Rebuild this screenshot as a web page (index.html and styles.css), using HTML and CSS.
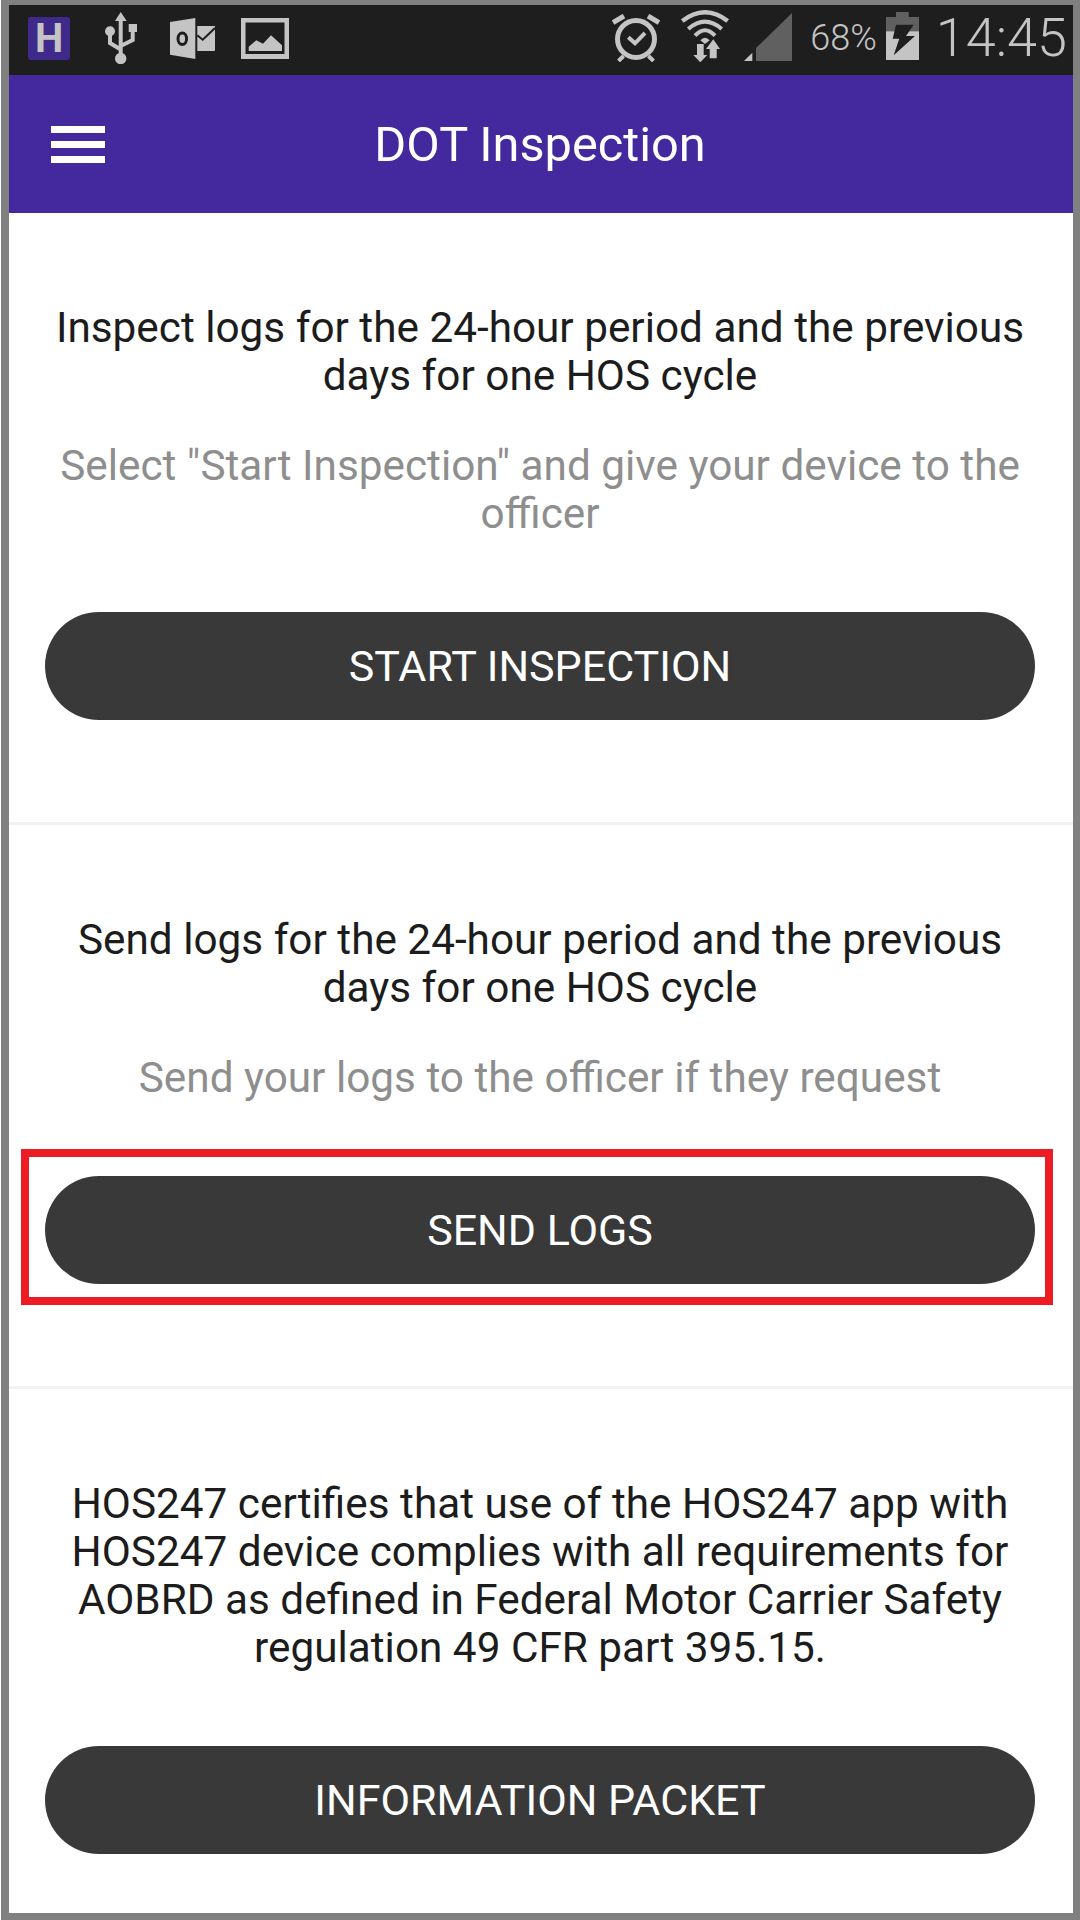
FILE: index.html
```html
<!DOCTYPE html>
<html lang="en">
<head>
  <meta charset="UTF-8" />
  <meta name="viewport" content="width=device-width, initial-scale=1.0" />
  <title>DOT Inspection</title>

  <link rel="stylesheet" href="styles.css">
</head>
<body>

  <div class="frame">

    <div class="statusbar">
      <div class="status-left">
        <div class="app-badge">H</div>

        <svg class="icon-usb" viewBox="0 0 32 52">
          <path fill="#c4c4c4" d="M15.700 0l6 9H10z"/>
          <path fill="none" stroke="#c4c4c4" stroke-width="4" d="M15.700 8v36M5 22v9l10.700 6.500M27.700 18v10l-12 6"/>
          <circle cx="15.700" cy="46.500" r="5.700" fill="#c4c4c4"/>
          <circle cx="5" cy="19.300" r="5" fill="#c4c4c4"/>
          <path fill="#c4c4c4" d="M23.700 12H32v8h-8.300z"/>
        </svg>

        <svg class="icon-outlook" viewBox="0 0 45 41">
          <path fill="#c4c4c4" d="M0 4L25.300 0v41L0 36.700z"/>
          <path fill="#c4c4c4" d="M27.300 8H45v24a1 1 0 0 1-1 1H27.300z"/>
          <path fill="none" stroke="#1e1e1e" stroke-width="2" d="M27.300 17.300l5.400 4.400L45 10"/>
          <ellipse cx="12.300" cy="20.700" rx="4.300" ry="5.800" fill="none" stroke="#1e1e1e" stroke-width="3"/>
        </svg>

        <svg class="icon-picture" viewBox="0 0 48 41">
          <path fill="#c4c4c4" fill-rule="evenodd" d="M0 0h48v41H0zM4.500 4.500v31.500h39V4.500z"/>
          <path fill="#c4c4c4" d="M7.700 33v-4.300l7.600-6.400 6.700 3.400 8-8.400 11 10V33z"/>
        </svg>
      </div>

      <div class="status-right">
        <svg class="icon-alarm" viewBox="0 0 48 48">
          <circle cx="24" cy="25" r="18.500" fill="none" stroke="#c4c4c4" stroke-width="5"/>
          <path fill="none" stroke="#c4c4c4" stroke-width="5" d="M1 8.500L12 2M47 8.500L36 2"/>
          <path fill="none" stroke="#c4c4c4" stroke-width="4" d="M6.500 47l5-5M41.500 47l-5-5"/>
          <path fill="none" stroke="#c4c4c4" stroke-width="4" d="M16.300 23.300l6.700 6 10-10.300"/>
        </svg>

        <svg class="icon-wifi" viewBox="0 0 49 52">
          <path fill="none" stroke="#c4c4c4" stroke-width="4.500" d="M2.300 11Q25-6.400 47.700 11"/>
          <path fill="none" stroke="#c4c4c4" stroke-width="4" d="M8.300 19Q25 4.400 41.700 19"/>
          <path fill="none" stroke="#c4c4c4" stroke-width="4" d="M15 25.700Q25 14.900 35 25.700"/>
          <path fill="#c4c4c4" d="M20.300 30.300Q25 25 29.700 30.300L25 34z"/>
          <path fill="#c4c4c4" d="M17 34h6.700v11h3.600l-7 7.300-7-7.300H17z"/>
          <path fill="#c4c4c4" d="M33.300 29.300l6.700 9.700h-3.300v9.300h-7V39H26z"/>
        </svg>

        <svg class="icon-signal" viewBox="0 0 48 48">
          <path fill="#606060" d="M12 48V35L48 0v48z"/>
          <path fill="#c4c4c4" d="M0 48l8.300-8.300V48z"/>
        </svg>

        <span class="battery-pct">68%</span>

        <svg class="icon-battery" viewBox="0 0 33 48">
          <path fill="#606060" d="M10 0h12.700v5H33v14.300H0V5h10z"/>
          <path fill="#c4c4c4" d="M0 19.300h33V48H0z"/>
          <path fill="#1e1e1e" d="M10 12.700h17.700L20 24h9L7.700 43.300l5.600-16.600H6.700z"/>
        </svg>

        <span class="clock">14:45</span>
      </div>
    </div>

    <div class="appbar">
      <div class="menu-icon">
        <span></span>
        <span></span>
        <span></span>
      </div>
      <h1>DOT Inspection</h1>
    </div>

    <div class="section">
      <p class="lead">Inspect logs for the 24-hour period and the previous days for one HOS cycle</p>
      <p class="hint">Select "Start Inspection" and give your device to the officer</p>
      <div class="btn-wrap">
        <button>START INSPECTION</button>
      </div>
    </div>

    <div class="section">
      <p class="lead">Send logs for the 24-hour period and the previous days for one HOS cycle</p>
      <p class="hint">Send your logs to the officer if they request</p>
      <div class="btn-wrap">
        <button>SEND LOGS</button>
        <div class="highlight"></div>
      </div>
    </div>

    <div class="section last">
      <p class="lead">HOS247 certifies that use of the HOS247 app with HOS247 device complies with all requirements for AOBRD as defined in Federal Motor Carrier Safety regulation 49 CFR part 395.15.</p>
      <div class="btn-wrap">
        <button>INFORMATION PACKET</button>
      </div>
    </div>

  </div>

</body>
</html>
```

FILE: styles.css
```css
* {
  margin: 0;
  padding: 0;
  box-sizing: border-box;
  font-family: Roboto, "Liberation Sans", sans-serif;
}

body {
  background: white;
}

.frame {
  width: 1079px;
  height: 1920px;
  margin-left: 1px;
  border-style: solid;
  border-color: #808080;
  border-width: 5px 7px 7px 8px;
  background: white;
  overflow: hidden;
}

.statusbar {
  height: 70px;
  padding-bottom: 4px;
  background: #1e1e1e;
  display: flex;
  justify-content: space-between;
  align-items: center;
  color: #c4c4c4;
}

.status-left,
.status-right {
  display: flex;
  align-items: center;
}

.status-left {
  padding-left: 19px;
}

.app-badge {
  width: 42px;
  height: 43px;
  margin-right: 35px;
  background: #3f2a8c;
  border-radius: 3px;
  text-align: center;
  font-size: 40px;
  font-weight: 700;
  line-height: 43px;
  color: #c4c4c4;
}

.icon-usb {
  width: 32px;
  height: 52px;
  margin-right: 33px;
}

.icon-outlook {
  width: 45px;
  height: 41px;
  margin-right: 26px;
}

.icon-picture {
  width: 48px;
  height: 41px;
}

.status-right {
  padding-right: 6px;
}

.icon-alarm {
  width: 48px;
  height: 48px;
  margin-right: 20px;
}

.icon-wifi {
  width: 49px;
  height: 52px;
  margin-right: 15px;
  margin-bottom: 4px;
}

.icon-signal {
  width: 48px;
  height: 48px;
  margin-right: 18px;
  margin-bottom: 2px;
}

.battery-pct {
  font-size: 36px;
  font-weight: 300;
  margin-right: 9px;
}

.icon-battery {
  width: 33px;
  height: 48px;
  margin-right: 17px;
  margin-bottom: 4px;
}

.clock {
  font-size: 54px;
  font-weight: 300;
  line-height: 70px;
}

.appbar {
  height: 138px;
  background: #44299e;
  display: flex;
  align-items: center;
}

.appbar h1 {
  flex: 1;
  padding-right: 98px;
  text-align: center;
  font-size: 48.700px;
  font-weight: 400;
  color: white;
}

.menu-icon {
  width: 54px;
  margin-left: 42px;
  display: flex;
  flex-direction: column;
  gap: 8px;
}

.menu-icon span {
  height: 7px;
  background: white;
}

.section {
  padding: 91px 38px 102px 36px;
  border-bottom: 3px solid #f2f2f2;
  text-align: center;
}

.section.last {
  border-bottom: none;
}

.lead {
  font-size: 42.300px;
  line-height: 48px;
  color: #1c1c1c;
}

.hint {
  margin-top: 42px;
  font-size: 42.300px;
  line-height: 48px;
  color: #8e8e8e;
}

.btn-wrap {
  margin-top: 74px;
  position: relative;
}

button {
  width: 100%;
  height: 108px;
  background: #393939;
  color: white;
  border: none;
  border-radius: 54px;
  font-size: 43px;
}

.highlight {
  position: absolute;
  top: -27px;
  bottom: -21px;
  left: -24px;
  right: -18px;
  border: 8px solid #ed1c24;
}
```
